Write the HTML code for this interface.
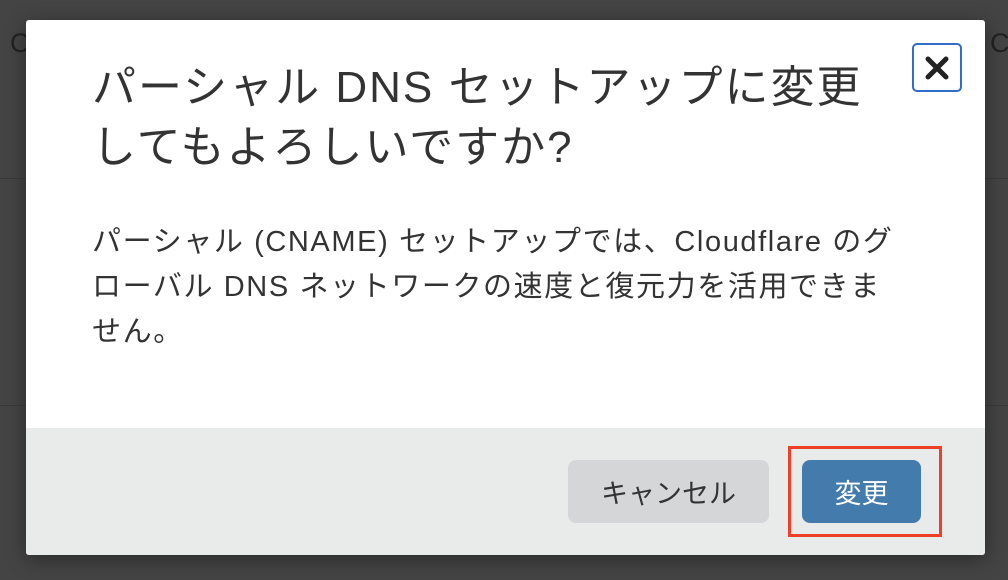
<!DOCTYPE html>
<html><head><meta charset="utf-8"><style>
body{margin:0;width:1008px;height:580px;background:#444;overflow:hidden;position:relative;font-family:"Liberation Sans","Noto Sans CJK JP",sans-serif}
.bg{position:absolute;color:#1a1a1a;font-size:27px}
.line{position:absolute;left:0;width:1008px;height:1px;background:#3a3a3a}
.modal{position:absolute;left:26px;top:20px;width:959px;height:535px;background:#fff;border-radius:3px;overflow:hidden;box-shadow:0 4px 20px rgba(0,0,0,.4)}
h1{position:absolute;left:66px;top:38px;margin:0;font-weight:400;font-size:44px;line-height:60px;color:#333;white-space:nowrap;letter-spacing:2px}
.close{position:absolute;left:886px;top:23px;width:46px;height:45px;border:2px solid #2f6dc6;border-radius:5px;display:flex;align-items:center;justify-content:center}
p{position:absolute;left:66px;top:200px;margin:0;font-size:29px;line-height:45px;color:#333;white-space:nowrap;letter-spacing:1.6px}
.foot{position:absolute;left:0;top:408px;width:959px;height:127px;background:#e9ebeb}
.btn{position:absolute;top:32px;height:63px;border-radius:8px;font-size:27px;display:flex;align-items:center;justify-content:center}
.cancel{left:542px;width:201px;background:#d5d6d8;color:#333}
.ok{left:776px;width:119px;background:#447bad;color:#fff}
.red{position:absolute;left:762px;top:18px;width:148px;height:85px;border:3px solid #ee4026}
</style></head><body>
<div class="line" style="top:178px"></div>
<div class="line" style="top:405px"></div>
<div class="bg" style="left:10px;top:28px;color:#222">C</div>
<div class="bg" style="left:990px;top:28px;color:#222">C</div>
<div class="modal">
<h1>パーシャル DNS セットアップに変更<br>してもよろしいですか?</h1>
<div class="close"><svg width="26" height="26" viewBox="0 0 26 26"><path d="M4 4L22 22M22 4L4 22" stroke="#222" stroke-width="5" stroke-linecap="round"/></svg></div>
<p>パーシャル (CNAME) セットアップでは、Cloudflare のグ<br>ローバル DNS ネットワークの速度と復元力を活用できま<br>せん。</p>
<div class="foot">
<div class="red"></div>
<div class="btn cancel">キャンセル</div>
<div class="btn ok">変更</div>
</div>
</div>
</body></html>
